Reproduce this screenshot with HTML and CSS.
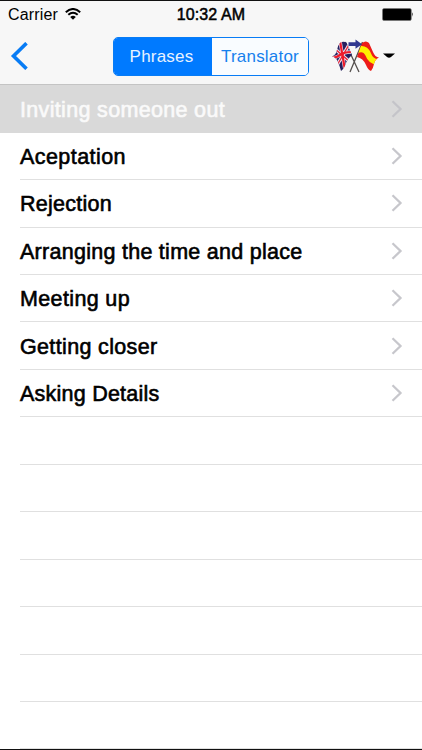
FILE: index.html
```html
<!DOCTYPE html>
<html lang="en">
<head>
  <meta charset="UTF-8" />
  <meta name="viewport" content="width=device-width, initial-scale=1.0" />
  <title>Phrases</title>
  <link rel="stylesheet" href="styles.css">
</head>
<body>
  <div class="screen">
    <header>
      <div class="status-bar">
        <div class="carrier">
          <span>Carrier</span>
          <svg class="wifi" width="16" height="12" viewBox="0 0 16 12">
            <path d="M0.8 4.2Q8-2.2 15.2 4.2M3.3 6.8Q8 2.7 12.7 6.8" fill="none" stroke="#000" stroke-width="2" />
            <path d="M5.2 9Q8 6.7 10.8 9L8 11.8z" />
          </svg>
        </div>
        <span class="time">10:32 AM</span>
        <svg class="battery" width="33" height="13" viewBox="0 0 33 13">
          <rect x="0.5" y="0.5" width="28.8" height="12" rx="1.5" fill="#000" stroke="#777" stroke-width="0.6" />
          <path d="M30.3 4.3q1.8 2.2 0 4.4z" />
        </svg>
      </div>

      <nav>
        <a class="back" href="#" aria-label="Back">
          <svg width="18" height="28" viewBox="0 0 18 28"><path d="M16.5 1.2L3.5 14l13 12.8" fill="none" stroke="#087cf5" stroke-width="3.6" /></svg>
        </a>
        <div class="segmented">
          <button class="segment active"><span class="phrases">Phrases</span></button>
          <button class="segment"><span class="translator">Translator</span></button>
        </div>
        <div class="language">
          <svg width="64" height="36" viewBox="0 0 64 36">
            <defs>
              <clipPath id="uk"><path d="M8 5Q11 3 14.5 4.5L20 17Q16 20 14 25Q12 31 9 33Q8 29 6 24Q4 19 0 18.5Q4 17 5 12Q6 7 8 5z" /></clipPath>
              <clipPath id="es"><path d="M30 5Q34 2 37 5L41 14Q43 19 47 19.5Q43 21 42 26Q41 31 39 33Q36 32 34 27Q31 20 25 19z" /></clipPath>
            </defs>
            <path d="M13 4L27 34M30.5 4L18 34" stroke="#55504e" stroke-width="1.3" />
            <g clip-path="url(#uk)">
              <path d="M0 0h24v36H0z" fill="#25205f" />
              <path d="M-1 20Q4 20 8 17T19 14M8 3L13 32M2 10L18 24M18 5L4 29" fill="none" stroke="#eadbea" stroke-width="3.4" />
              <path d="M-1 20Q4 20 8 17T19 14M8 3L13 32" fill="none" stroke="#ed1c2c" stroke-width="2.2" />
              <path d="M2 10L18 24M18 5L4 29" stroke="#ed1c2c" stroke-width="1.2" />
            </g>
            <g clip-path="url(#es)">
              <path d="M24 0h24v36H24z" fill="#ed1c19" />
              <path d="M25 12Q33 9 36 16Q39 24 46 24" fill="none" stroke="#fff000" stroke-width="6" />
            </g>
            <path d="M16.5 4.2h7V1.5L30 6.2l-6.5 4.6V8h-7z" fill="#303790" />
            <path d="M51 15.5h12l-4 3.5q-2 1.6-4 0z" />
          </svg>
        </div>
      </nav>
    </header>

    <ul class="list" id="phraseList"></ul>
  </div>

  <script>
    const ROWS = 14;
    const phrases = [
      { title: "Inviting someone out", width: 205, selected: true },
      { title: "Aceptation", width: 106 },
      { title: "Rejection", width: 92 },
      { title: "Arranging the time and place", width: 282.5 },
      { title: "Meeting up", width: 110 },
      { title: "Getting closer", width: 137.5 },
      { title: "Asking Details", width: 139.5 }
    ];

    const list = document.getElementById("phraseList");

    for (let i = 0; i < ROWS; i++) {
      const phrase = phrases[i];
      const row = document.createElement("li");
      row.className = phrase && phrase.selected ? "row selected" : "row";
      row.innerHTML = `
        <div class="cell">
          ${phrase ? `
            <span class="title">${phrase.title}</span>
            <svg class="chevron" width="12" height="18" viewBox="0 0 12 18">
              <path d="M1.5 1.2L9.5 9l-8 7.8" />
            </svg>` : ""}
        </div>
      `;
      list.appendChild(row);

      // spread the letters so every title keeps its set width
      if (phrase) {
        const title = row.querySelector(".title");
        const extra = phrase.width - title.getBoundingClientRect().width;
        title.style.letterSpacing = `${extra / phrase.title.length}px`;
      }
    }
  </script>
</body>
</html>
```
FILE: styles.css
```css
* {
  box-sizing: border-box;
}

body {
  margin: 0;
  background-color: #fff;
  color: #000;
  font-family: "Liberation Sans", Arial, sans-serif;
}

.screen {
  height: 750px;
  overflow: hidden;
  border-top: 1px solid #111;
  border-bottom: 1px solid #111;
}

header {
  height: 84.3px;
  background-color: #f7f7f7;
  border-bottom: 1px solid #c4c4c4;
}

.status-bar {
  display: grid;
  grid-template-columns: 1fr auto 1fr;
  align-items: center;
  height: 27px;
  padding: 0 8px;
  font-size: 16px;
}

.carrier {
  display: flex;
  align-items: center;
  gap: 7px;
  letter-spacing: 0.15px;
}

.wifi {
  margin-bottom: 1px;
}

.time {
  letter-spacing: 0.1px;
  -webkit-text-stroke: 0.5px #000;
}

.battery {
  justify-self: end;
  margin-right: -1px;
}

nav {
  display: flex;
  align-items: center;
  height: 56px;
  padding-left: 10px;
}

.back {
  display: flex;
  width: 103px;
}

.segmented {
  display: flex;
  width: 196px;
  height: 39px;
  border: 1.3px solid #087cf5;
  border-radius: 5px;
  overflow: hidden;
}

.segment {
  flex: 1;
  padding: 2px 0 0;
  border: none;
  background-color: #f9fcff;
  color: #1680ed;
  font-family: inherit;
  font-size: 17px;
  white-space: nowrap;
}

.segment.active {
  flex: 0 0 98px;
  padding-right: 3px;
  background-color: #007aff;
  color: #e8f3ff;
}

.phrases {
  letter-spacing: 0.2px;
}

.translator {
  letter-spacing: 0.2px;
}

.language {
  display: flex;
  margin-left: 23px;
}

.list {
  margin: 0;
  padding: 0;
  list-style: none;
}

.row {
  height: 47.45px;
  padding-left: 20px;
}

.cell {
  display: flex;
  align-items: center;
  justify-content: space-between;
  height: 100%;
  padding-right: 19px;
  border-bottom: 1px solid #e0e0e0;
}

.title {
  padding-top: 3px;
  font-size: 21.5px;
  white-space: nowrap;
  -webkit-text-stroke: 0.6px currentColor;
}

.chevron path {
  fill: none;
  stroke: #c7c7cc;
  stroke-width: 2.3;
}

.selected {
  background-color: #d9d9d9;
  color: #fafafa;
}

.selected .cell {
  border-color: #d9d9d9;
}

.selected .chevron path {
  stroke: #c4c4c9;
}
```
